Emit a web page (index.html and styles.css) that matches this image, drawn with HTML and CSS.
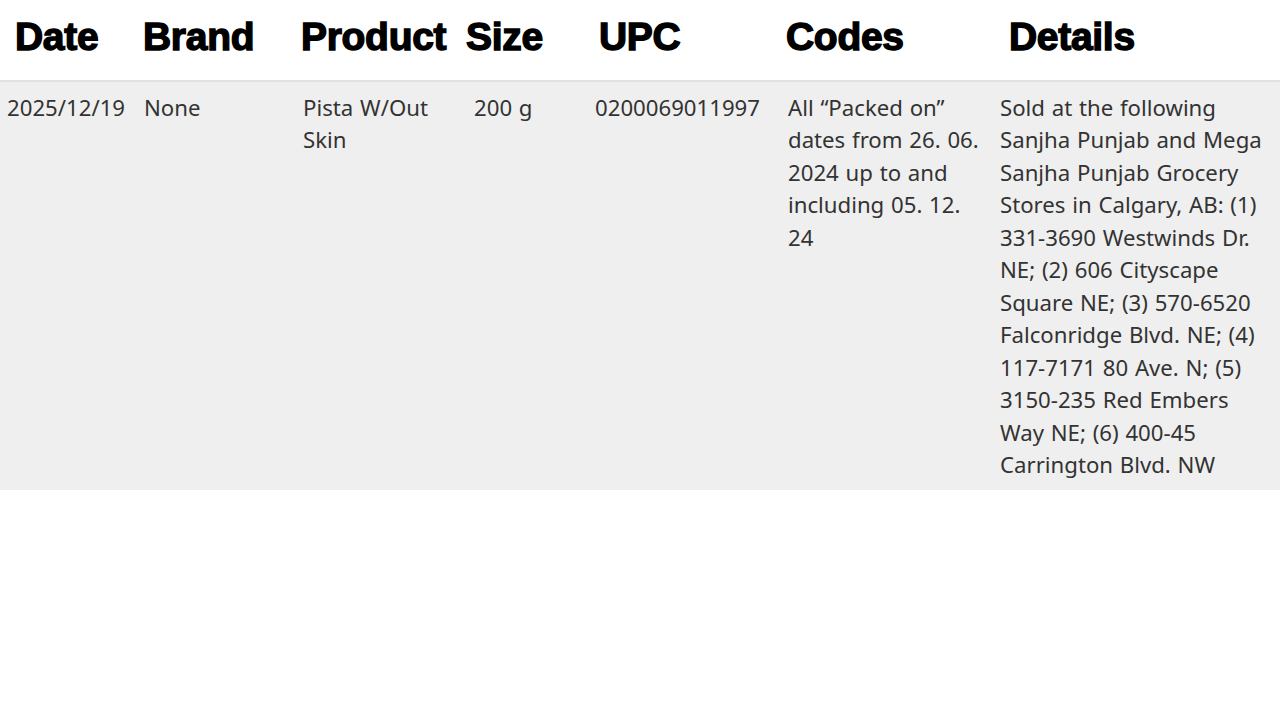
FILE: index.html
```html
<!DOCTYPE html>
<html lang="en">
<head>
<meta charset="utf-8">
<title>Recall</title>
<link rel="stylesheet" href="styles.css">
</head>
<body>
<div class="table">
  <div class="head">
    <div class="h">Date</div>
    <div class="h">Brand</div>
    <div class="h">Product</div>
    <div class="h">Size</div>
    <div class="h">UPC</div>
    <div class="h">Codes</div>
    <div class="h">Details</div>
  </div>
  <div class="row">
    <div class="c">2025/12/19</div>
    <div class="c">None</div>
    <div class="c">Pista W/Out Skin</div>
    <div class="c">200 g</div>
    <div class="c">0200069011997</div>
    <div class="c">All “Packed on” dates from 26. 06. 2024 up to and including 05. 12. 24</div>
    <div class="c">Sold at the following Sanjha Punjab and Mega Sanjha Punjab Grocery Stores in Calgary, AB: (1) 331-3690 Westwinds Dr. NE; (2) 606 Cityscape Square NE; (3) 570-6520 Falconridge Blvd. NE; (4) 117-7171 80 Ave. N; (5) 3150-235 Red Embers Way NE; (6) 400-45 Carrington Blvd. NW</div>
  </div>
</div>
</body>
</html>
```
FILE: styles.css
```css
html, body {
  margin: 0;
  padding: 0;
  background: #ffffff;
}
.table {
  width: 1280px;
}
.head {
  display: grid;
  grid-template-columns: 128px 158px 165px 133px 187px 223px 1fr;
  padding-left: 15px;
  height: 80px;
  align-items: center;
  border-bottom: 2px solid #e2e2e2;
}
.h {
  font-family: "Liberation Sans", Arial, sans-serif;
  font-weight: 700;
  font-size: 39px;
  color: #000;
  -webkit-text-stroke: 1.4px #000;
  letter-spacing: -0.3px;
  padding-bottom: 6px;
}
.row {
  display: grid;
  grid-template-columns: 137px 159px 171px 121px 193px 212px 1fr;
  background: #efefef;
  padding: 10px 0 9px 0;
}
.c {
  font-family: "Noto Sans", "Open Sans", sans-serif;
  font-size: 22.2px;
  line-height: 32.45px;
  word-spacing: 1px;
  color: #333333;
  padding: 0 7px;
}
```
